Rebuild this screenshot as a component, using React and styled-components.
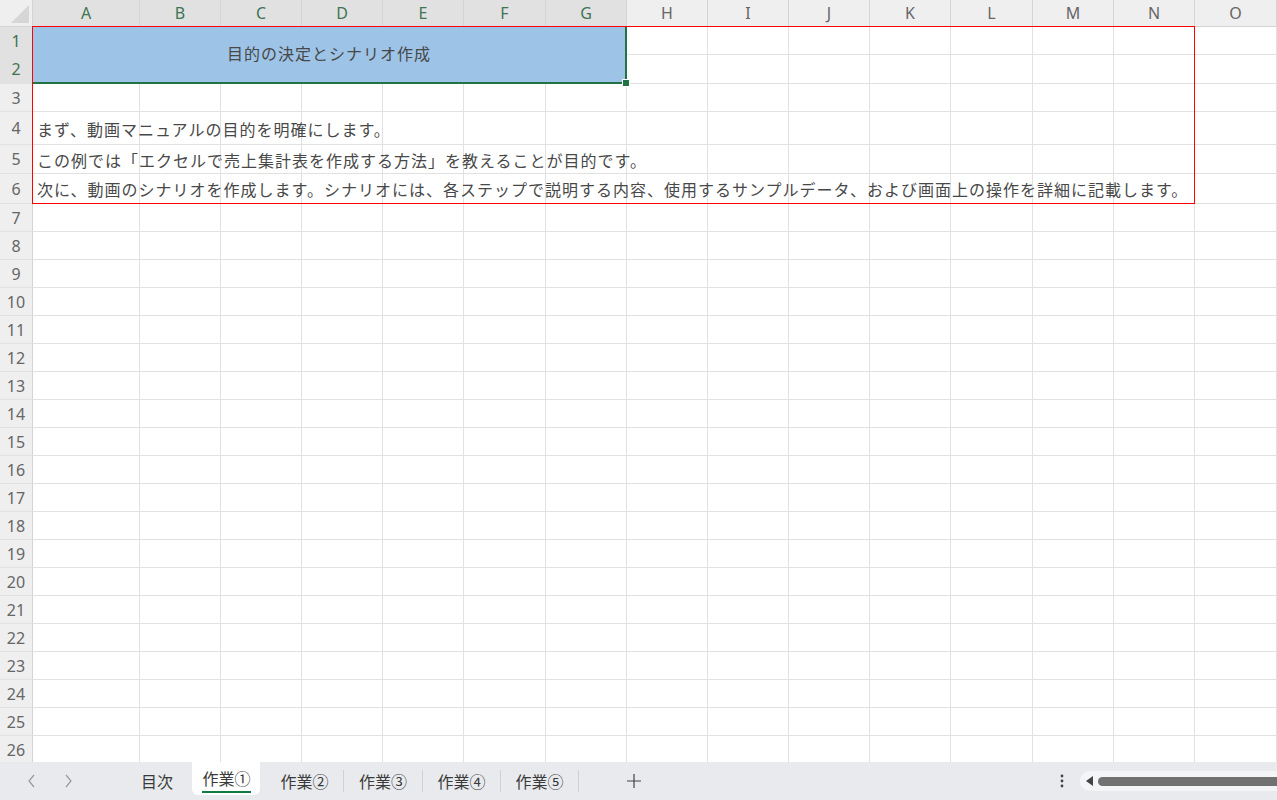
import React from "react";
import styled, { createGlobalStyle } from "styled-components";

const GlobalStyle = createGlobalStyle`
  html, body {
    margin: 0;
    padding: 0;
    overflow: hidden;
    background: #ffffff;
  }
  body {
    font-family: "Noto Sans CJK JP", "Noto Sans", sans-serif;
  }
`;

const COLS = ["A", "B", "C", "D", "E", "F", "G", "H", "I", "J", "K", "L", "M", "N", "O"];
const COL_WIDTHS = [107, 81, 81, 81, 81, 82, 81, 81, 81, 81, 81, 82, 81, 81, 82];
const ROW_HEIGHTS = [28, 29, 28, 33, 29, 30, ...Array(20).fill(28)];

const Page = styled.div`
  width: 1277px;
  height: 800px;
  display: flex;
  flex-direction: column;
  overflow: hidden;
`;

const Sheet = styled.div`
  height: 762px;
  overflow: hidden;
  display: grid;
  grid-template-columns: 33px ${COL_WIDTHS.map((w) => w + "px").join(" ")};
  grid-template-rows: 27px ${ROW_HEIGHTS.map((h) => h + "px").join(" ")};
`;

const Corner = styled.div`
  grid-row: 1;
  grid-column: 1;
  background: #efefef;
  border-right: 1px solid #d4d4d4;
  border-bottom: 1px solid #d4d4d4;
  box-sizing: border-box;
  display: flex;
  align-items: flex-end;
  justify-content: flex-end;
  padding: 0 3px 3px 0;
`;

const CornerTriangle = styled.div`
  width: 0;
  height: 0;
  border-left: 18px solid transparent;
  border-bottom: 18px solid #d6d6d6;
`;

const ColHeader = styled.div`
  grid-row: 1;
  background: ${(p) => (p.$selected ? "#e1e1e1" : "#efefef")};
  color: ${(p) => (p.$selected ? "#3f7454" : "#666666")};
  border-right: 1px solid #d4d4d4;
  border-bottom: 1px solid ${(p) => (p.$selected ? "#217346" : "#d4d4d4")};
  box-sizing: border-box;
  display: flex;
  align-items: center;
  justify-content: center;
  font-family: "Noto Sans", sans-serif;
  font-size: 16px;
`;

const RowHeader = styled.div`
  grid-column: 1;
  background: ${(p) => (p.$selected ? "#e1e1e1" : "#efefef")};
  color: ${(p) => (p.$selected ? "#3f7454" : "#666666")};
  border-right: 1px solid #d4d4d4;
  border-bottom: 1px solid #e2e2e2;
  box-sizing: border-box;
  display: flex;
  align-items: center;
  justify-content: center;
  font-family: "Noto Sans", sans-serif;
  font-size: 16px;
`;

const Cell = styled.div`
  border-right: 1px solid #e1e1e1;
  border-bottom: 1px solid #e1e1e1;
  box-sizing: border-box;
  background: #ffffff;
`;

const Merged = styled.div`
  grid-row: 2 / 4;
  grid-column: 2 / 9;
  position: relative;
  background: #9dc3e6;
  border-right: 2px solid #217346;
  border-bottom: 2px solid #217346;
  box-sizing: border-box;
  display: flex;
  align-items: center;
  justify-content: center;
  padding-bottom: 3px;
  font-size: 16px;
  letter-spacing: 1px;
  color: #484848;
  z-index: 2;
`;

const FillHandle = styled.div`
  position: absolute;
  right: -5px;
  bottom: -5px;
  width: 6px;
  height: 6px;
  background: #217346;
  border: 1px solid #ffffff;
`;

const LineText = styled.div`
  grid-column: 2 / -1;
  grid-row: ${(p) => p.$row};
  z-index: 2;
  display: flex;
  align-items: center;
  padding-left: 4px;
  white-space: nowrap;
  font-size: 16px;
  letter-spacing: 1px;
  color: #484848;
  pointer-events: none;
`;

const Annotation = styled.div`
  grid-row: 2 / 8;
  grid-column: 2 / 16;
  border: 1px solid #ff0000;
  margin: -1px 0 0 -1px;
  z-index: 3;
  pointer-events: none;
`;

const TabBar = styled.div`
  height: 38px;
  background: #e8eaed;
  display: flex;
  align-items: center;
  font-family: "Noto Sans CJK JP", "Noto Sans", sans-serif;
`;

const NavButtons = styled.div`
  width: 127px;
  display: flex;
  align-items: center;
  gap: 26px;
  padding-left: 27px;
  box-sizing: border-box;
`;

const Tabs = styled.div`
  display: flex;
  align-items: center;
  height: 100%;
`;

const Tab = styled.div`
  width: ${(p) => p.$width}px;
  height: 100%;
  display: flex;
  align-items: center;
  justify-content: center;
  position: relative;
`;

const Separator = styled.div`
  width: 1px;
  height: 22px;
  background: ${(p) => (p.$hidden ? "transparent" : "#cfd1d4")};
`;

const ActiveFace = styled.div`
  position: absolute;
  left: 4px;
  right: 5px;
  top: 0;
  bottom: 5px;
  background: #ffffff;
  border-radius: 0 0 6px 6px;
`;

const TabLabel = styled.span`
  position: relative;
  font-size: 16px;
  color: #3a3a3a;
  margin-top: ${(p) => (p.$active ? "-6px" : "0")};
`;

const Underline = styled.div`
  position: absolute;
  left: 14px;
  right: 14px;
  bottom: 7px;
  height: 2px;
  background: #107c41;
`;

const AddTab = styled.div`
  width: 110px;
  display: flex;
  justify-content: center;
  align-items: center;
`;

const Spacer = styled.div`
  flex: 1;
`;

const Dots = styled.div`
  width: 20px;
  margin-right: 8px;
  display: flex;
  justify-content: center;
`;

const Scroll = styled.div`
  width: 197px;
  height: 20px;
  background: #f4f5f7;
  border-radius: 10px 0 0 10px;
  display: flex;
  align-items: center;
  padding-left: 6px;
  box-sizing: border-box;
  gap: 4px;
`;

const Thumb = styled.div`
  flex: 1;
  height: 9px;
  background: #717171;
  border-radius: 5px 0 0 5px;
`;

const Chevron = ({ dir }) => (
  <svg width="10" height="14" viewBox="0 0 10 14">
    <path
      d={dir === "left" ? "M7 1 L2 7 L7 13" : "M3 1 L8 7 L3 13"}
      fill="none"
      stroke="#9a9a9a"
      strokeWidth="1.2"
    />
  </svg>
);

const lines = {
  4: "まず、動画マニュアルの目的を明確にします。",
  5: "この例では「エクセルで売上集計表を作成する方法」を教えることが目的です。",
  6: "次に、動画のシナリオを作成します。シナリオには、各ステップで説明する内容、使用するサンプルデータ、および画面上の操作を詳細に記載します。",
};

const tabs = [
  { name: "目次", width: 60 },
  { name: "作業①", width: 77, active: true },
  { name: "作業②", width: 77 },
  { name: "作業③", width: 78 },
  { name: "作業④", width: 77 },
  { name: "作業⑤", width: 77 },
];

export default function App() {
  const cells = [];
  ROW_HEIGHTS.forEach((_, ri) => {
    const row = ri + 1;
    cells.push(
      <RowHeader key={"rh" + row} $selected={row <= 2} style={{ gridRow: row + 1 }}>
        {row}
      </RowHeader>
    );
    COLS.forEach((_, ci) => {
      if (row <= 2 && ci <= 6) return;
      cells.push(
        <Cell key={`c${row}-${ci}`} style={{ gridRow: row + 1, gridColumn: ci + 2 }} />
      );
    });
  });

  return (
    <Page>
      <GlobalStyle />
      <Sheet>
        <Corner>
          <CornerTriangle />
        </Corner>
        {COLS.map((c, i) => (
          <ColHeader key={c} $selected={i <= 6} style={{ gridColumn: i + 2 }}>
            {c}
          </ColHeader>
        ))}
        {cells}
        <Merged>
          目的の決定とシナリオ作成
          <FillHandle />
        </Merged>
        {Object.entries(lines).map(([r, t]) => (
          <LineText key={r} $row={Number(r) + 1}>
            {t}
          </LineText>
        ))}
        <Annotation />
      </Sheet>
      <TabBar>
        <NavButtons>
          <Chevron dir="left" />
          <Chevron dir="right" />
        </NavButtons>
        <Tabs>
          {tabs.map((t, i) => (
            <React.Fragment key={t.name}>
              {i > 0 && <Separator $hidden={t.active || tabs[i - 1].active} />}
              <Tab $width={t.width}>
                {t.active && <ActiveFace />}
                <TabLabel $active={t.active}>{t.name}</TabLabel>
                {t.active && <Underline />}
              </Tab>
            </React.Fragment>
          ))}
          <Separator />
        </Tabs>
        <AddTab>
          <svg width="14" height="14" viewBox="0 0 14 14">
            <path d="M7 0 V14 M0 7 H14" stroke="#444" strokeWidth="1.2" />
          </svg>
        </AddTab>
        <Spacer />
        <Dots>
          <svg width="4" height="14" viewBox="0 0 4 14">
            <circle cx="2" cy="2" r="1.4" fill="#444" />
            <circle cx="2" cy="7" r="1.4" fill="#444" />
            <circle cx="2" cy="12" r="1.4" fill="#444" />
          </svg>
        </Dots>
        <Scroll>
          <svg width="8" height="10" viewBox="0 0 8 10">
            <path d="M7 0 L0 5 L7 10 Z" fill="#444" />
          </svg>
          <Thumb />
        </Scroll>
      </TabBar>
    </Page>
  );
}
